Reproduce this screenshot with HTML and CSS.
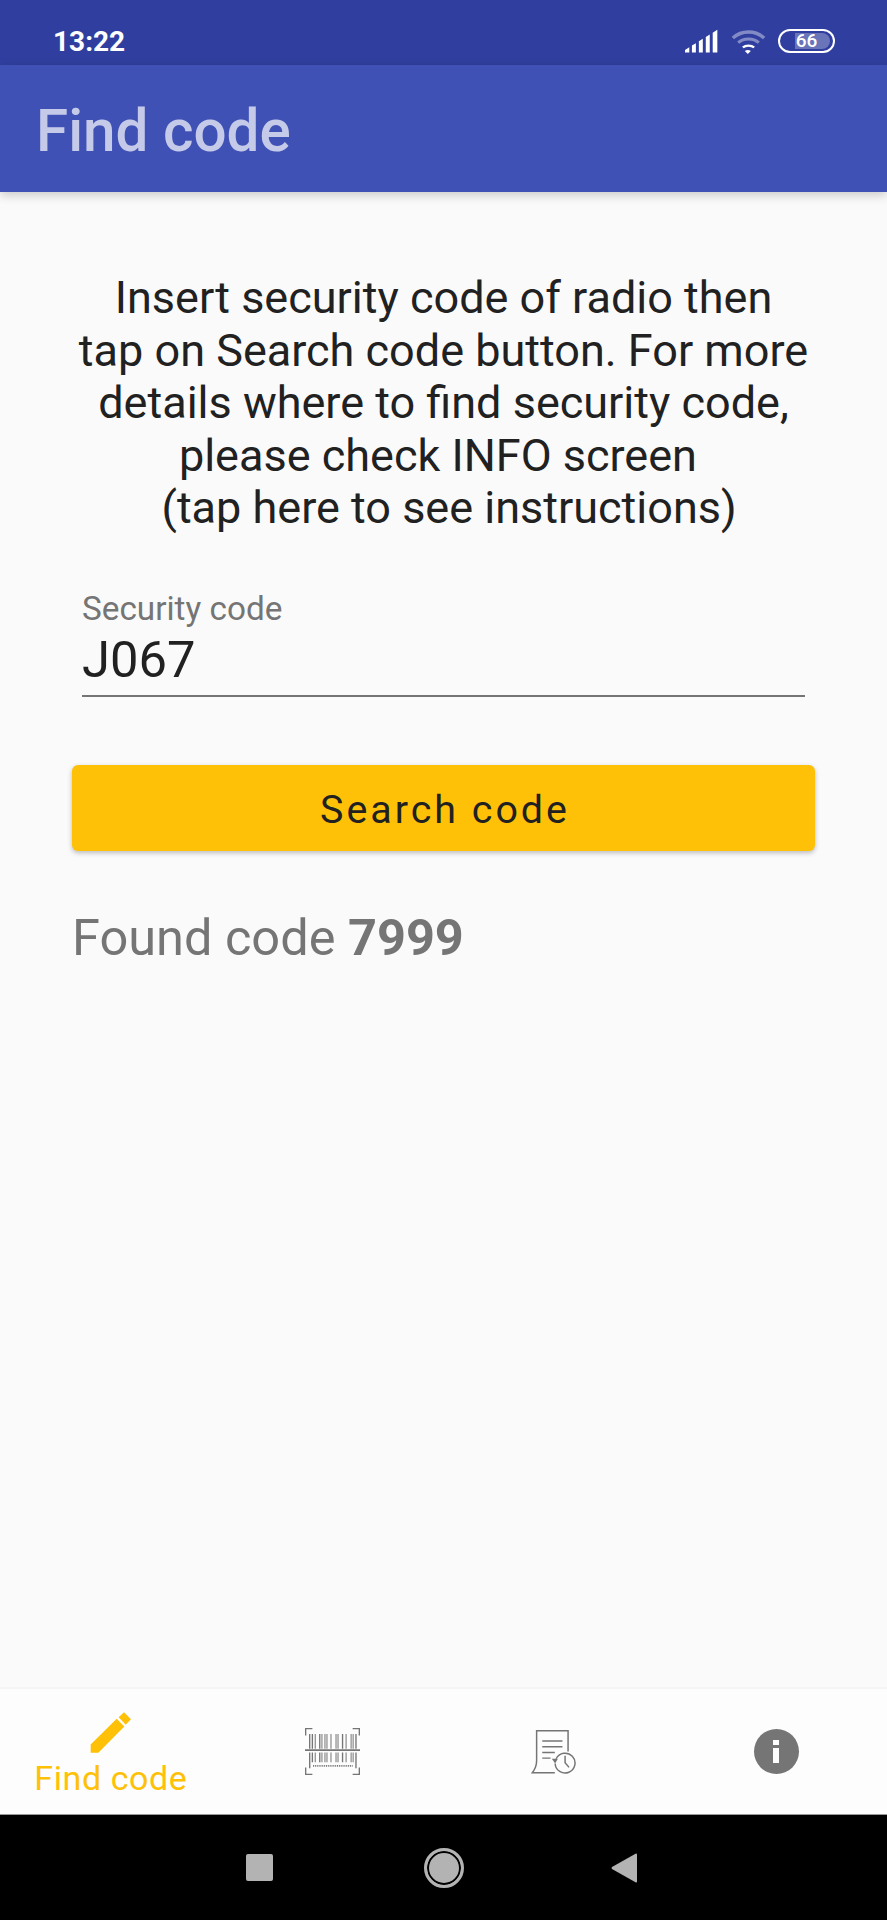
FILE: index.html
```html
<!DOCTYPE html>
<html lang="en">
<head>
  <meta charset="UTF-8" />
  <meta name="viewport" content="width=device-width, initial-scale=1.0"/>
  <title>Find code</title>
  <link rel="stylesheet" href="styles.css">
</head>
<body>

<div class="status">
  <span class="time">13:22</span>
  <div class="status-icons">
    <svg class="signal" viewBox="75 55 100 70">
      <path d="M75 125v-8l13-8v16zM96 125v-21l12-7v28zM117 125v-34l12-8v42zM138 125v-47l12-8v55zM159 125v-60l14-9v69z" fill="#fff"/>
    </svg>
    <svg class="wifi" viewBox="213 52 104 78">
      <path d="M218 82c26-24 68-24 94 0" fill="none" stroke="#fff" stroke-opacity=".4" stroke-width="10"/>
      <path d="M234 96c17-15 45-15 62 0" fill="none" stroke="#fff" stroke-opacity=".4" stroke-width="9"/>
      <path d="M248 110c9-7 25-7 34 0" fill="none" stroke="#fff" stroke-width="7"/>
      <path d="M263 130l-9-9c5-4 13-4 18 0z" fill="#fff"/>
    </svg>
    <div class="battery">
      <div class="battery-level"></div>
      <span>66</span>
    </div>
  </div>
</div>

<div class="appbar">Find code</div>

<div class="content">
  <p class="intro">Insert security code of radio then<br>tap on Search code button. For more<br>details where to find security code,<br>please check INFO screen <br> (tap here to see instructions)</p>

  <div class="field">
    <label>Security code</label>
    <div class="field-value">J067</div>
  </div>

  <button class="search">Search code</button>

  <p class="found">Found code <b>7999</b></p>
</div>

<div class="bottomnav">
  <div class="tab active">
    <svg class="ic-pencil" viewBox="270 125 123 122">
      <path d="M272 247v-25l78-77 23 23-78 79zM356 140l16-15 21 21-16 17z" fill="#ffc107"/>
    </svg>
    <span>Find code</span>
  </div>
  <div class="tab">
    <svg class="ic-barcode" viewBox="916 170 164 140">
      <g fill="none" stroke="#757575" stroke-width="4">
        <path d="M918 192v-20h20M1058 172h20v20M918 288v20h20M1058 308h20v-20"/>
        <path d="M916 236h164" stroke-width="5"/>
        <path d="M940 283h118" stroke-width="5" stroke-dasharray="3 2.5"/>
      </g>
      <path d="M928 188h4v44h-4zM936 188h4v44h-4zM945 188h3v44h-3zM958 188h4v44h-4zM965 188h3v44h-3zM974 188h3v44h-3zM980 188h3v44h-3zM992 188h3v44h-3zM1007 188h3v44h-3zM1013 188h3v44h-3zM1026 188h4v44h-4zM1037 188h3v44h-3zM1052 188h3v44h-3zM1058 188h3v44h-3zM1066 188h4v44h-4z" fill="#757575"/>
      <path d="M928 243h4v47h-4zM936 243h4v29h-4zM945 243h3v29h-3zM958 243h4v29h-4zM965 243h3v29h-3zM974 243h3v29h-3zM980 243h3v29h-3zM992 243h3v29h-3zM1007 243h3v29h-3zM1013 243h3v29h-3zM1026 243h4v29h-4zM1037 243h3v29h-3zM1052 243h3v29h-3zM1058 243h3v29h-3zM1066 243h4v47h-4z" fill="#757575"/>
    </svg>
  </div>
  <div class="tab">
    <svg class="ic-history" viewBox="260 170 145 140">
      <g fill="none" stroke="#757575" stroke-width="4.5">
        <path d="M375 240v-63h-95v90c0 14-6 28-13 37h68"/>
        <path d="M297 208h61M297 226h61M297 243h38M297 260h25"/>
        <path d="M339 262a30 30 0 1 1-3 14"/>
        <path d="M366 253v21l12 14"/>
      </g>
      <path d="M326 262l18 0-8 14z" fill="#757575"/>
    </svg>
  </div>
  <div class="tab">
    <div class="ic-info"><span class="dot"></span><span class="stem"></span></div>
  </div>
</div>

<div class="softkeys">
  <span class="key-square"></span>
  <span class="key-circle"></span>
  <svg class="key-back" viewBox="0 0 27 30">
    <path d="M26 1.500v27q0 1.500-1.500.8L1 16q-1-1 0-2L24.500.7q1.500-.7 1.500.8z" fill="#b3b3b3"/>
  </svg>
</div>

</body>
</html>
```

FILE: styles.css
```css
* {
  box-sizing: border-box;
}
body {
  margin: 0;
  height: 1920px;
  display: flex;
  flex-direction: column;
  font-family: Roboto, "Noto Sans", sans-serif;
  background: #fafafa;
}
.status {
  height: 65px;
  background: #303f9f;
  color: #fff;
  display: flex;
  justify-content: space-between;
  align-items: center;
  padding: 0 52px 0 53px;
}
.time {
  font-size: 28px;
  font-weight: 700;
  margin-top: 17px;
}
.status-icons {
  display: flex;
  align-items: center;
  margin-top: 16px;
}
.signal {
  width: 33px;
  height: 24px;
  margin-right: 13px;
}
.wifi {
  width: 35px;
  height: 26px;
  margin-right: 12px;
}
.battery {
  position: relative;
  width: 57px;
  height: 24px;
  border: 2px solid #fff;
  border-radius: 12px;
  color: #fff;
  font-size: 19px;
  font-weight: 500;
  text-align: center;
  line-height: 20px;
}
.battery span {
  position: relative;
}
.battery-level {
  position: absolute;
  top: 2px;
  bottom: 2px;
  right: 3px;
  width: 66%;
  border-radius: 0 9px 9px 0;
  background: rgba(255, 255, 255, .28);
}
.appbar {
  height: 127px;
  background: #3f51b5;
  color: #c5cae9;
  font-size: 58.4px;
  font-weight: 500;
  display: flex;
  align-items: center;
  padding: 4px 0 0 36px;
  box-shadow: 0 3px 10px rgba(0, 0, 0, .2);
  position: relative;
}
.content {
  flex: 1;
  padding: 0 72px;
}
.intro {
  margin: 80px -20px 0;
  text-align: center;
  font-size: 45px;
  line-height: 52.6px;
  color: #212121;
  white-space: pre;
}
.field {
  margin: 56px 10px 0;
  border-bottom: 2px solid #757575;
  height: 106px;
}
.field label {
  display: block;
  font-size: 33.3px;
  line-height: 36px;
  color: #757575;
}
.field-value {
  font-size: 50.7px;
  line-height: 66px;
  color: #212121;
}
.search {
  display: block;
  width: 100%;
  height: 86px;
  margin-top: 68px;
  padding: 3px 0 0 3px;
  border: 0;
  border-radius: 6px;
  background: #ffc107;
  color: #212121;
  font-family: inherit;
  font-size: 39.4px;
  letter-spacing: 3px;
  box-shadow: 0 2px 5px rgba(0, 0, 0, .25);
}
.found {
  margin: 55px 0 0 0;
  font-size: 50.5px;
  line-height: 64px;
  color: #757575;
}
.bottomnav {
  height: 127px;
  background: #fdfdfd;
  border-top: 2px solid #f5f5f5;
  display: flex;
}
.tab {
  flex: 1;
  display: flex;
  flex-direction: column;
  align-items: center;
  justify-content: center;
}
.tab.active {
  justify-content: flex-start;
  color: #ffc107;
  font-size: 34px;
  padding-top: 23px;
}
.tab.active span {
  line-height: 40px;
  margin-top: 5px;
  letter-spacing: .6px;
}
.ic-pencil {
  width: 41px;
  height: 41px;
}
.ic-barcode {
  width: 55px;
  height: 47px;
}
.ic-history {
  width: 48px;
  height: 47px;
}
.ic-info {
  width: 45px;
  height: 45px;
  border-radius: 50%;
  background: #757575;
  display: flex;
  flex-direction: column;
  align-items: center;
  justify-content: center;
}
.ic-info .dot {
  width: 6px;
  height: 5px;
  background: #fdfdfd;
  margin-bottom: 3px;
}
.ic-info .stem {
  width: 6px;
  height: 15px;
  background: #fdfdfd;
}
.softkeys {
  height: 106px;
  background: #000;
  border-top: 1px solid #999;
  display: flex;
  align-items: center;
  justify-content: center;
  padding-right: 4px;
}
.key-square {
  width: 27px;
  height: 27px;
  border-radius: 2px;
  background: #b3b3b3;
}
.key-circle {
  width: 40px;
  height: 40px;
  margin: 0 147px 0 151px;
  border-radius: 50%;
  background: #b3b3b3;
  border: 3px solid #b3b3b3;
  box-shadow: inset 0 0 0 2px #000;
}
.key-back {
  width: 27px;
  height: 30px;
}
```
